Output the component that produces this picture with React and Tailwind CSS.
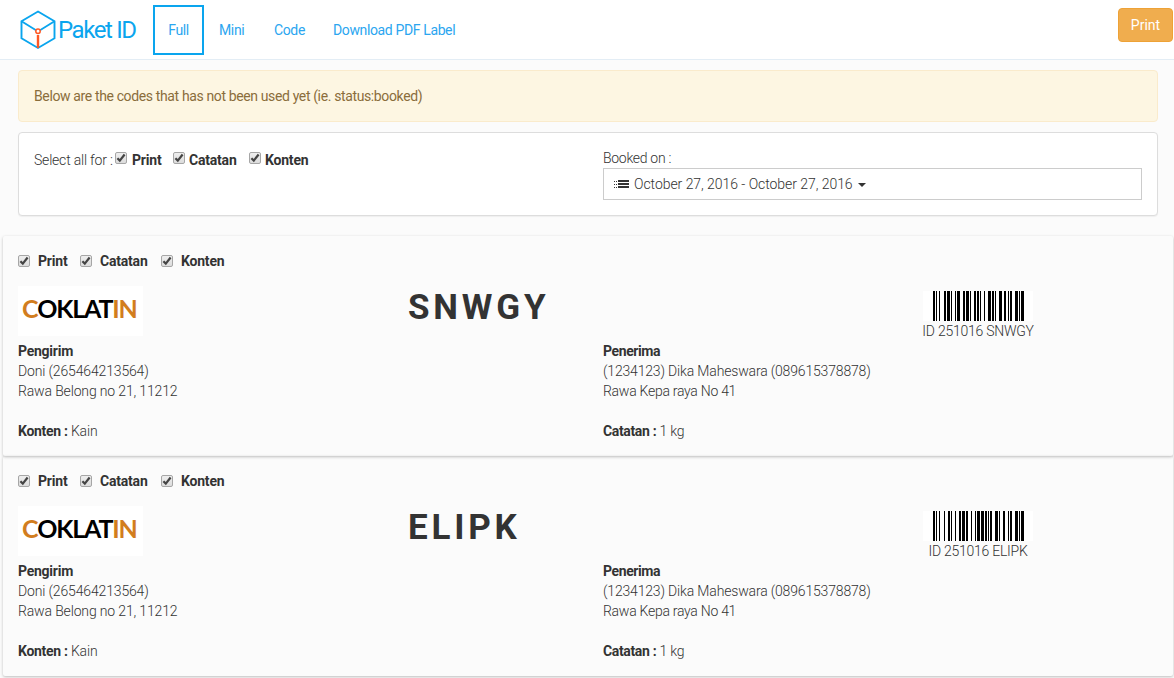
const PATTERNS = {
  S: "213113", N: "113321", W: "311321", G: "211313", Y: "312113",
  E: "132113", L: "132131", I: "231311", P: "313121", K: "112331",
};
const START = "211214";
const STOP = "2331113";

function Barcode({ code, check }) {
  const widths = START + code.split("").map((c) => PATTERNS[c]).join("") + check + STOP;
  const bars = [];
  let x = 10;
  widths.split("").forEach((w, i) => {
    if (i % 2 === 0) bars.push(<rect key={i} x={x} y="0" width={Number(w)} height="30" />);
    x += Number(w);
  });
  return (
    <svg className="block h-[30px] w-[110px] bg-white" viewBox="0 0 110 30" shapeRendering="crispEdges">
      {bars}
    </svg>
  );
}

function Check() {
  return (
    <span className="flex size-3 shrink-0 items-center justify-center rounded-[2px] border border-[#a6a6a6] bg-linear-to-b from-[#eeeeee] to-[#dcdcdc]">
      <svg className="block size-[10px]" viewBox="0 0 10 10" fill="none" stroke="#444" strokeWidth="2.2">
        <path d="M1.4 5.2 3.8 7.6 8.6 1.5" />
      </svg>
    </span>
  );
}

function PaketLogo() {
  return (
    <svg className="block h-[40px] w-[36px]" viewBox="0 0 36 40" fill="none">
      <path d="M18 1.5 34.5 11.3V28.3L18 38 1.5 28.3V11.3Z" stroke="#0aa5ee" strokeWidth="1.9" />
      <path d="M1.5 11.3 18 21.5 34.5 11.3" stroke="#0aa5ee" strokeWidth="1.9" />
      <path d="M18 25V38" stroke="#ff5722" strokeWidth="2.4" />
      <circle cx="18" cy="21.3" r="2.2" fill="#fff" stroke="#ff5722" strokeWidth="1.5" />
    </svg>
  );
}

function Shipment({ code, check }) {
  return (
    <section className="h-[220px] rounded-[2px] px-[15px] pt-[15px] shadow-[0_1px_3px_rgba(0,0,0,0.25)]">
      <div className="flex h-5 items-center font-bold tracking-[-0.2px]">
        <Check />
        <span className="ml-2 w-[42px]">Print</span>
        <Check />
        <span className="ml-2 w-[61px]">Catatan</span>
        <Check />
        <span className="ml-2">Konten</span>
      </div>
      <div className="mt-[15px] flex h-[55px] items-start">
        <div className="flex h-[50px] w-[125px] shrink-0 items-center bg-white pb-[5px] pl-1 font-[Lato] text-[25px] leading-none font-bold tracking-[-1.2px] text-black">
          <span className="text-[#d27d1e]">C</span>OKLAT<span className="text-[#d27d1e]">IN</span>
        </div>
        <div className="ml-[265px] w-[515px] text-[35px] leading-[43px] font-bold tracking-[3.8px]">{code}</div>
        <div className="flex w-[110px] flex-col items-center pt-[5px]">
          <Barcode code={code} check={check} />
          <span className="leading-5 tracking-[-0.25px] whitespace-nowrap">ID 251016 {code}</span>
        </div>
      </div>
      <div className="flex leading-5">
        <div className="w-[585px] tracking-[-0.15px]">
          <p className="font-bold tracking-[-0.25px]">Pengirim</p>
          <p>Doni (265464213564)</p>
          <p>Rawa Belong no 21, 11212</p>
          <p className="mt-5"><b className="font-bold tracking-[-0.3px]">Konten :</b> Kain</p>
        </div>
        <div className="tracking-[-0.17px]">
          <p className="font-bold tracking-[-0.4px]">Penerima</p>
          <p>(1234123) Dika Maheswara (089615378878)</p>
          <p className="tracking-[-0.27px]">Rawa Kepa raya No 41</p>
          <p className="mt-5"><b className="font-bold tracking-[-0.35px]">Catatan :</b> 1 kg</p>
        </div>
      </div>
    </section>
  );
}

export default function App() {
  return (
    <div className="h-[678px] w-[1174px] overflow-hidden bg-[#fbfbfb] font-[Roboto,sans-serif] text-[14px] font-light text-[#333]">
      <header className="flex h-[60px] items-start border-b border-[#e3edf5] bg-white pl-5 text-[#2ba6f0]">
        <div className="flex h-[59px] w-[133px] items-center">
          <PaketLogo />
          <span className="ml-[2px] text-[24px] font-normal tracking-[-1.4px] whitespace-nowrap text-[#0aa5ee]">Paket ID</span>
        </div>
        <nav className="flex pt-[5px] leading-[46px] font-normal tracking-[-0.37px]">
          <a className="h-[50px] w-[51px] border-2 border-[#0aa5ee] text-center">Full</a>
          <a className="ml-[15px] w-[55px] pt-[2px]">Mini</a>
          <a className="w-[59px] pt-[2px]">Code</a>
          <a className="pt-[2px]">Download PDF Label</a>
        </nav>
        <button className="mt-2 mr-[1px] ml-auto h-[34px] w-[55px] rounded-[4px] border border-[#eea236] bg-[#f0ad4e] font-normal text-white">Print</button>
      </header>
      <main>
        <div className="mt-[10px] mr-4 ml-[18px] flex h-[52px] items-center rounded-[4px] border border-[#faebcc] bg-[#fdf6e2] px-[15px] text-[#8a6d3b]">
          <span className="font-normal tracking-[-0.37px]">Below are the codes that has not been used yet (ie. status:booked)</span>
        </div>
        <div className="mt-[10px] mr-4 ml-[18px] flex h-[84px] rounded-[4px] border border-[#dddddd] bg-white pr-[15px] pl-[15px] shadow-[0_1px_1px_rgba(0,0,0,0.05)]">
          <div className="flex w-[569px] items-start pt-[17px] leading-5 tracking-[-0.2px]">
            <span className="w-[81px] whitespace-nowrap">Select all for :</span>
            <span className="pt-[2px]"><Check /></span>
            <b className="ml-[5px] w-[41px] font-bold">Print</b>
            <span className="pt-[2px]"><Check /></span>
            <b className="ml-[4px] w-[60px] font-bold">Catatan</b>
            <span className="pt-[2px]"><Check /></span>
            <b className="ml-[4px] font-bold">Konten</b>
          </div>
          <div className="w-[539px] pt-[15px]">
            <p className="leading-5 tracking-[-0.3px]">Booked on :</p>
            <div className="flex h-[32px] items-center border border-[#cccccc] pl-[10px]">
              <svg className="block h-[9px] w-[15px]" viewBox="0 0 15 9" fill="#333" shapeRendering="crispEdges">
                <path d="M0 1h1v1H0zM2 1h1v1H2zM0 4h1v1H0zM2 4h1v1H2zM0 7h1v1H0zM2 7h1v1H2z" />
                <path d="M4 0h11v2H4zM4 3h11v2H4zM4 6h11v2H4z" />
              </svg>
              <span className="ml-[5px] w-[219px] tracking-[-0.05px] whitespace-nowrap">October 27, 2016 - October 27, 2016</span>
              <svg className="mt-[2px] ml-[5px] block h-1 w-2" viewBox="0 0 8 4"><path d="M0 0h8L4 4z" fill="#333" /></svg>
            </div>
          </div>
        </div>
        <div className="mt-5 mr-[1px] ml-[3px]">
          <Shipment code="SNWGY" check="322211" />
          <Shipment code="ELIPK" check="132311" />
        </div>
      </main>
    </div>
  );
}
